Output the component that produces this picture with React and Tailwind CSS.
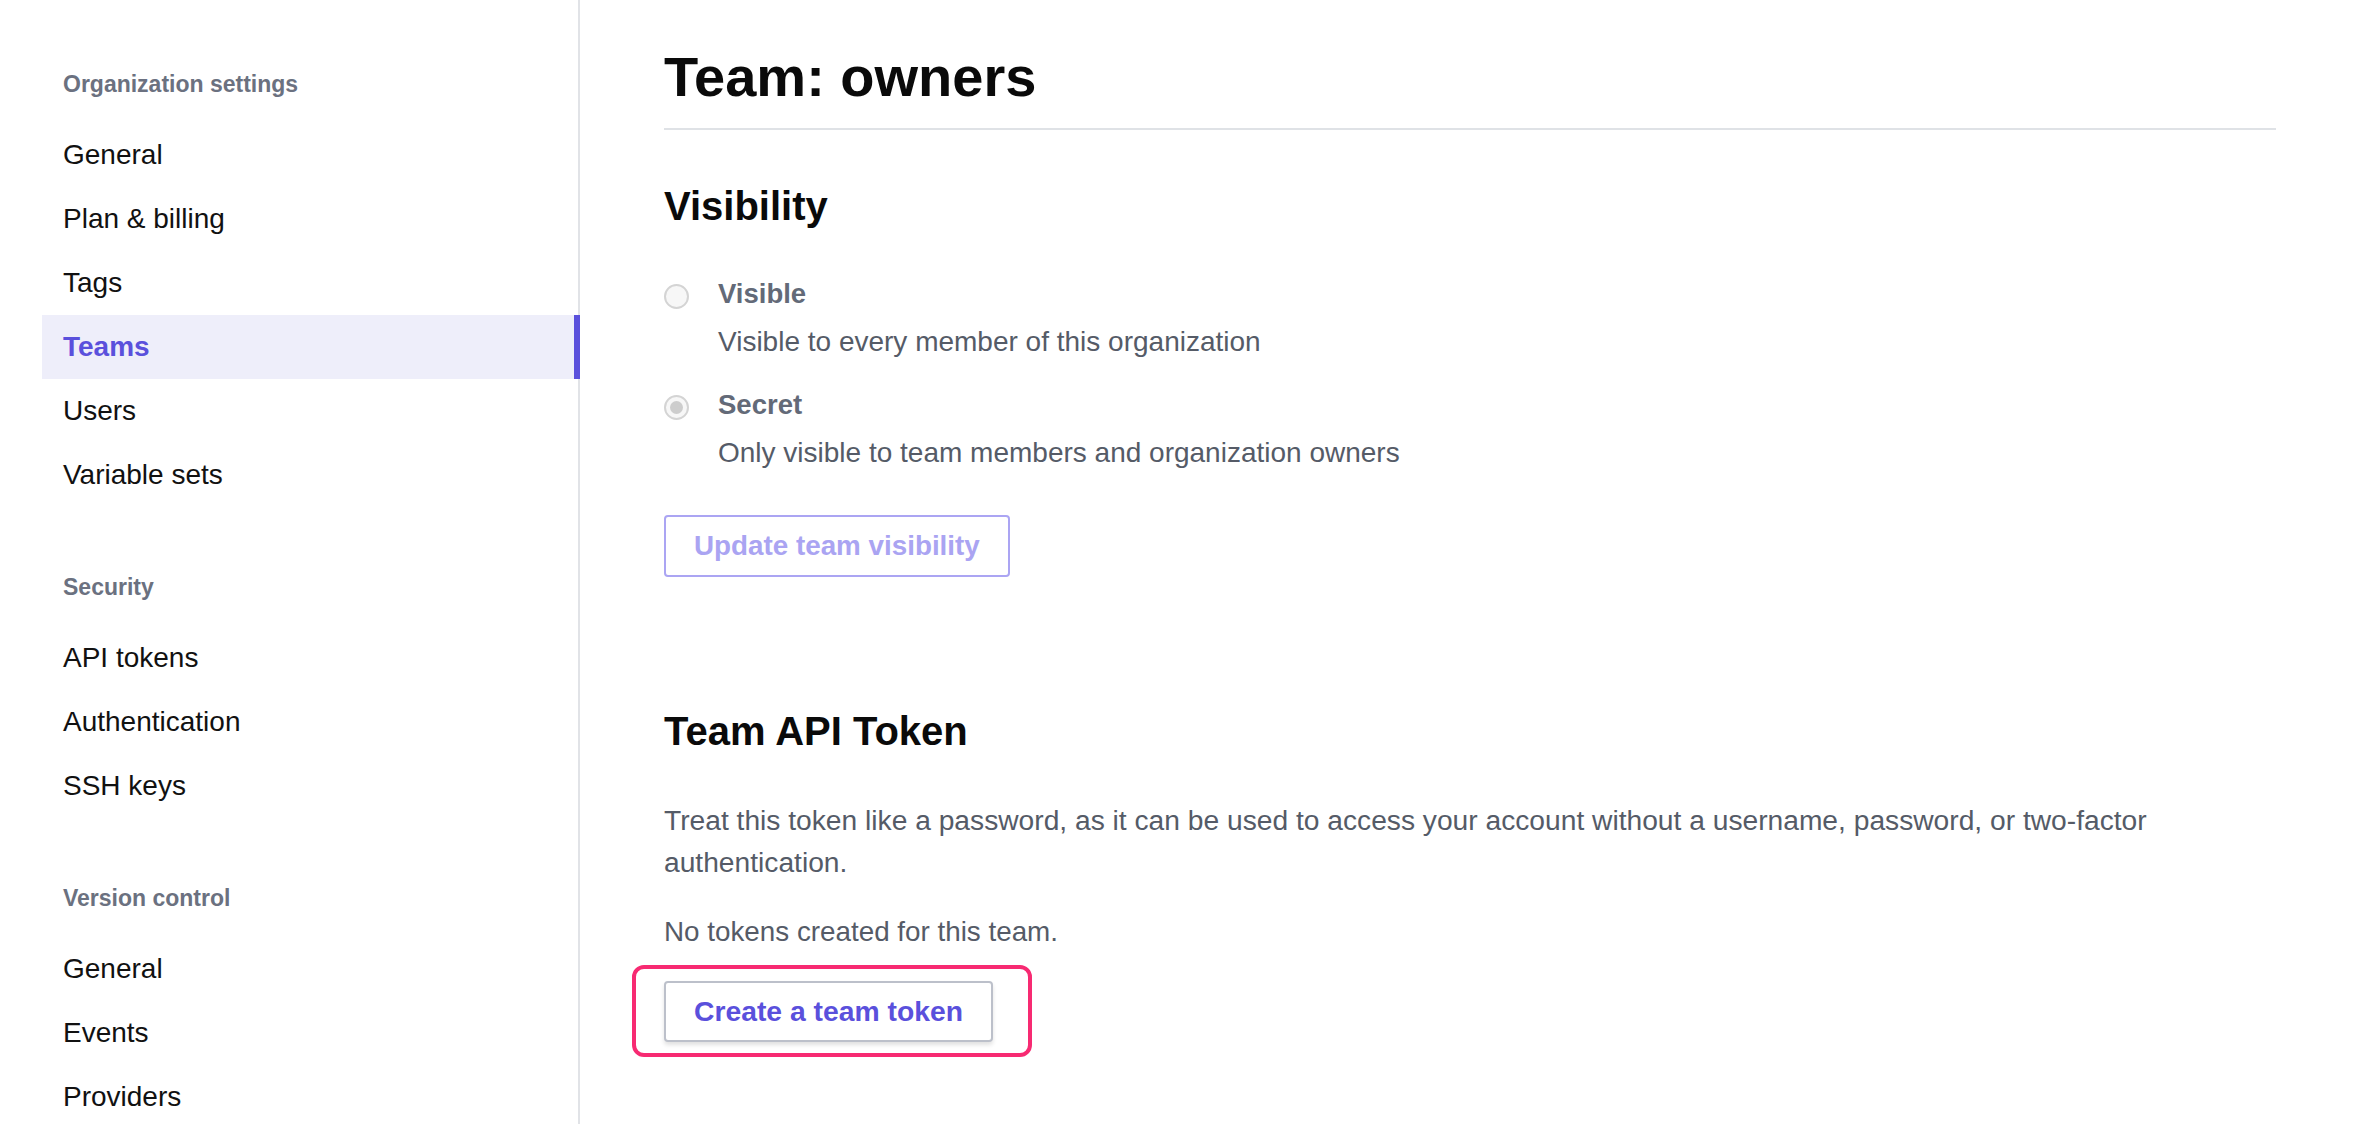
import React from "react";

const groups = [
  {
    label: "Organization settings",
    items: ["General", "Plan & billing", "Tags", "Teams", "Users", "Variable sets"],
  },
  { label: "Security", items: ["API tokens", "Authentication", "SSH keys"] },
  { label: "Version control", items: ["General", "Events", "Providers"] },
];

function Radio({ checked }) {
  return (
    <div className="mt-[6px] flex h-[25px] w-[25px] shrink-0 items-center justify-center rounded-full border-2 border-[#d4d4d4] bg-[#f7f7f7]">
      {checked ? <div className="h-[13px] w-[13px] rounded-full bg-[#cdcdcd]" /> : null}
    </div>
  );
}

function RadioRow({ checked, label, desc, className }) {
  return (
    <div className={"flex gap-[29px] " + (className || "")}>
      <Radio checked={checked} />
      <div className="flex flex-col">
        <div className="text-[27.5px] font-bold leading-[32px] text-[#636a78]">{label}</div>
        <div className="mt-[16px] text-[28px] leading-[32px] text-[#555b67]">{desc}</div>
      </div>
    </div>
  );
}

export default function App() {
  return (
    <div
      className="flex h-[1124px] overflow-hidden bg-white"
      style={{ fontFamily: '"Liberation Sans", Arial, Helvetica, sans-serif' }}
    >
      <aside className="flex w-[580px] shrink-0 flex-col border-r-2 border-[#e1e3e7] pt-[68px]">
        {groups.map((g, gi) => (
          <div key={g.label} className={gi > 0 ? "mt-[64px] flex flex-col" : "flex flex-col"}>
            <div className="mb-[23px] pl-[63px] text-[23px] font-bold leading-[32px] text-[#6b7180]">
              {g.label}
            </div>
            {g.items.map((it) => {
              const active = gi === 0 && it === "Teams";
              return (
                <div
                  key={it}
                  className={
                    active
                      ? "-mr-[2px] ml-[42px] flex h-[64px] items-center border-r-[6px] border-[#5a50dc] bg-[#eeeefa] pl-[21px] text-[28px] font-bold text-[#5a50dc]"
                      : "-mr-[2px] ml-[42px] flex h-[64px] items-center pl-[21px] text-[28px] text-[#111111]"
                  }
                >
                  {it}
                </div>
              );
            })}
          </div>
        ))}
      </aside>

      <main className="flex min-w-0 flex-1 flex-col px-[84px] pt-[49px]">
        <div className="border-b-2 border-[#dfe2e6] pb-[23px]">
          <h1 className="text-[56px] font-bold leading-[56px] text-[#0a0a0a]">Team: owners</h1>
        </div>

        <h2 className="mt-[56px] text-[40px] font-bold leading-[40px] text-[#0a0a0a]">Visibility</h2>

        <div className="mt-[52px] flex flex-col">
          <RadioRow label="Visible" desc="Visible to every member of this organization" />
          <RadioRow
            checked
            className="mt-[31px]"
            label="Secret"
            desc="Only visible to team members and organization owners"
          />
        </div>

        <div className="mt-[46px]">
          <button className="h-[62px] rounded-[4px] border-2 border-[#aba5f3] bg-white px-[28px] text-[27.8px] font-bold text-[#aaa4f2]">
            Update team visibility
          </button>
        </div>

        <h2 className="mt-[134px] text-[40px] font-bold leading-[40px] text-[#0a0a0a]">Team API Token</h2>

        <p className="mt-[48px] text-[28.2px] leading-[42px] text-[#555b67]">
          Treat this token like a password, as it can be used to access your account without a username, password, or two-factor authentication.
        </p>

        <p className="mt-[28px] text-[27.8px] leading-[42px] text-[#555b67]">No tokens created for this team.</p>

        <div className="mt-[28px]">
          <div className="relative inline-block">
            <button className="h-[61px] rounded-[4px] border-2 border-[#bcc0ca] bg-white px-[28px] text-[28.3px] font-bold text-[#5a50dc] shadow-[0_3px_4px_rgba(0,0,0,0.12)]">
              Create a team token
            </button>
            <div className="pointer-events-none absolute -bottom-[15px] -left-[32px] -right-[39px] -top-[16px] rounded-[12px] border-4 border-[#f72a72]" />
          </div>
        </div>
      </main>
    </div>
  );
}
